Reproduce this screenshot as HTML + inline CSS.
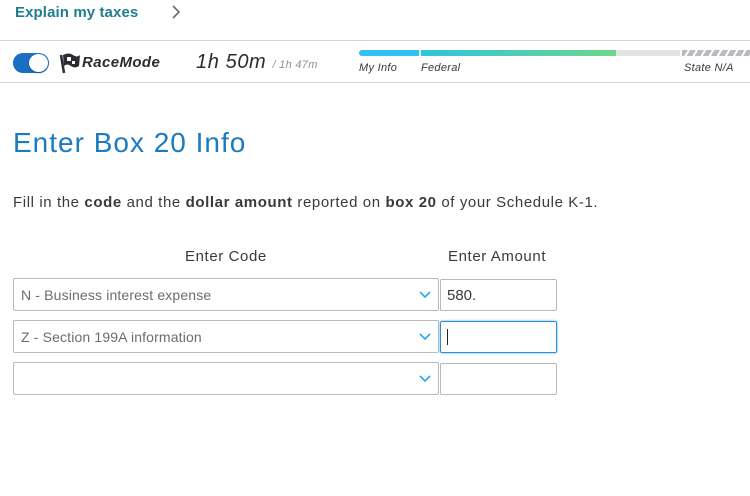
<!DOCTYPE html>
<html><head><style>
*{margin:0;padding:0;box-sizing:border-box}
body{width:750px;height:496px;background:#fff;font-family:"Liberation Sans",sans-serif;position:relative;overflow:hidden;color:#393a3d}
.a{position:absolute}
.sel{position:absolute;left:13px;width:426px;height:33px;border:1px solid #b8b9bc;border-radius:2px;font-size:14px;color:#6b6c72;padding:8px 7px;letter-spacing:0.15px}
.inp{position:absolute;left:440px;width:117px;height:32px;border:1px solid #b8b9bc;border-radius:2px;font-size:15px;padding:7px 6px}
.chev{position:absolute;right:7px;top:12px}
</style></head><body>
<div class="a" style="left:15px;top:4px;font-size:15px;font-weight:bold;color:#1f7d8c;letter-spacing:0.1px">Explain my taxes</div>
<svg class="a" style="left:170px;top:4px" width="12" height="16"><path d="M3 2 L9 8 L3 14" stroke="#6b6c72" stroke-width="1.6" fill="none"/></svg>
<div class="a" style="left:0;top:40px;width:750px;height:1px;background:#d4d5d8"></div>
<div class="a" style="left:0;top:82px;width:750px;height:1px;background:#d4d5d8"></div>
<div class="a" style="left:13px;top:53px;width:36px;height:20px;border-radius:10px;background:#1a6fc4"></div>
<div class="a" style="left:29px;top:54px;width:19px;height:18px;border-radius:50%;background:#fff;box-shadow:0 1px 2px rgba(0,0,0,.3)"></div>
<svg class="a" style="left:59px;top:51px" width="22" height="24"><path d="M2 4 L5 22" stroke="#2b2c30" stroke-width="2.5"/><path d="M4 4 Q10 1 14 4 Q18 7 21 4 L20 15 Q16 18 12 15 Q8 12 5 15Z" fill="#2b2c30"/><rect x="8" y="6" width="4" height="4" fill="#fff"/><rect x="13" y="10" width="3" height="3" fill="#fff"/></svg>
<div class="a" style="left:82px;top:54px;font-size:15px;font-weight:bold;font-style:italic;color:#2b2c30;letter-spacing:0.4px">RaceMode</div>
<div class="a" style="left:196px;top:51px;font-size:20px;font-style:italic;color:#2b2c30;letter-spacing:0.6px">1h 50m <span style="font-size:11px;color:#8d9096;letter-spacing:0.3px">/ 1h 47m</span></div>
<div class="a" style="left:359px;top:50px;width:60px;height:6px;border-radius:3px 0 0 3px;background:#2ec1f5"></div>
<div class="a" style="left:421px;top:50px;width:195px;height:6px;background:linear-gradient(90deg,#2ec4e0,#6ed68a)"></div>
<div class="a" style="left:616px;top:50px;width:64px;height:6px;background:#e3e4e7"></div>
<div class="a" style="left:682px;top:50px;width:68px;height:6px;background:repeating-linear-gradient(120deg,#b9bbc1 0 5px,#fff 5px 7px)"></div>
<div class="a" style="left:359px;top:62px;font-size:11px;font-style:italic;color:#393a3d;letter-spacing:0.3px">My Info</div>
<div class="a" style="left:421px;top:62px;font-size:11px;font-style:italic;color:#393a3d;letter-spacing:0.3px">Federal</div>
<div class="a" style="left:684px;top:62px;font-size:11px;font-style:italic;color:#393a3d;letter-spacing:0.3px">State N/A</div>
<div class="a" style="left:13px;top:127px;font-size:28px;color:#1a7bbf;letter-spacing:1px">Enter Box 20 Info</div>
<div class="a" style="left:13px;top:194px;font-size:15px;letter-spacing:0.6px;white-space:nowrap">Fill in the <b>code</b> and the <b>dollar amount</b> reported on <b>box 20</b> of your Schedule K-1.</div>
<div class="a" style="left:185px;top:248px;font-size:15px;letter-spacing:0.6px">Enter Code</div>
<div class="a" style="left:448px;top:248px;font-size:15px;letter-spacing:0.6px">Enter Amount</div>
<div class="sel" style="top:278px">N - Business interest expense<svg class="chev" width="12" height="8"><path d="M1 1 L6 6 L11 1" stroke="#2ea3f2" stroke-width="1.6" fill="none"/></svg></div>
<div class="sel" style="top:320px">Z - Section 199A information<svg class="chev" width="12" height="8"><path d="M1 1 L6 6 L11 1" stroke="#2ea3f2" stroke-width="1.6" fill="none"/></svg></div>
<div class="sel" style="top:362px"><svg class="chev" width="12" height="8"><path d="M1 1 L6 6 L11 1" stroke="#2ea3f2" stroke-width="1.6" fill="none"/></svg></div>
<div class="inp" style="top:279px">580.</div>
<div class="inp" style="top:321px;border-color:#2b8ed8;box-shadow:0 0 2px #4aa8ee"><div style="width:1px;height:16px;background:#222"></div></div>
<div class="inp" style="top:363px"></div>
</body></html>
